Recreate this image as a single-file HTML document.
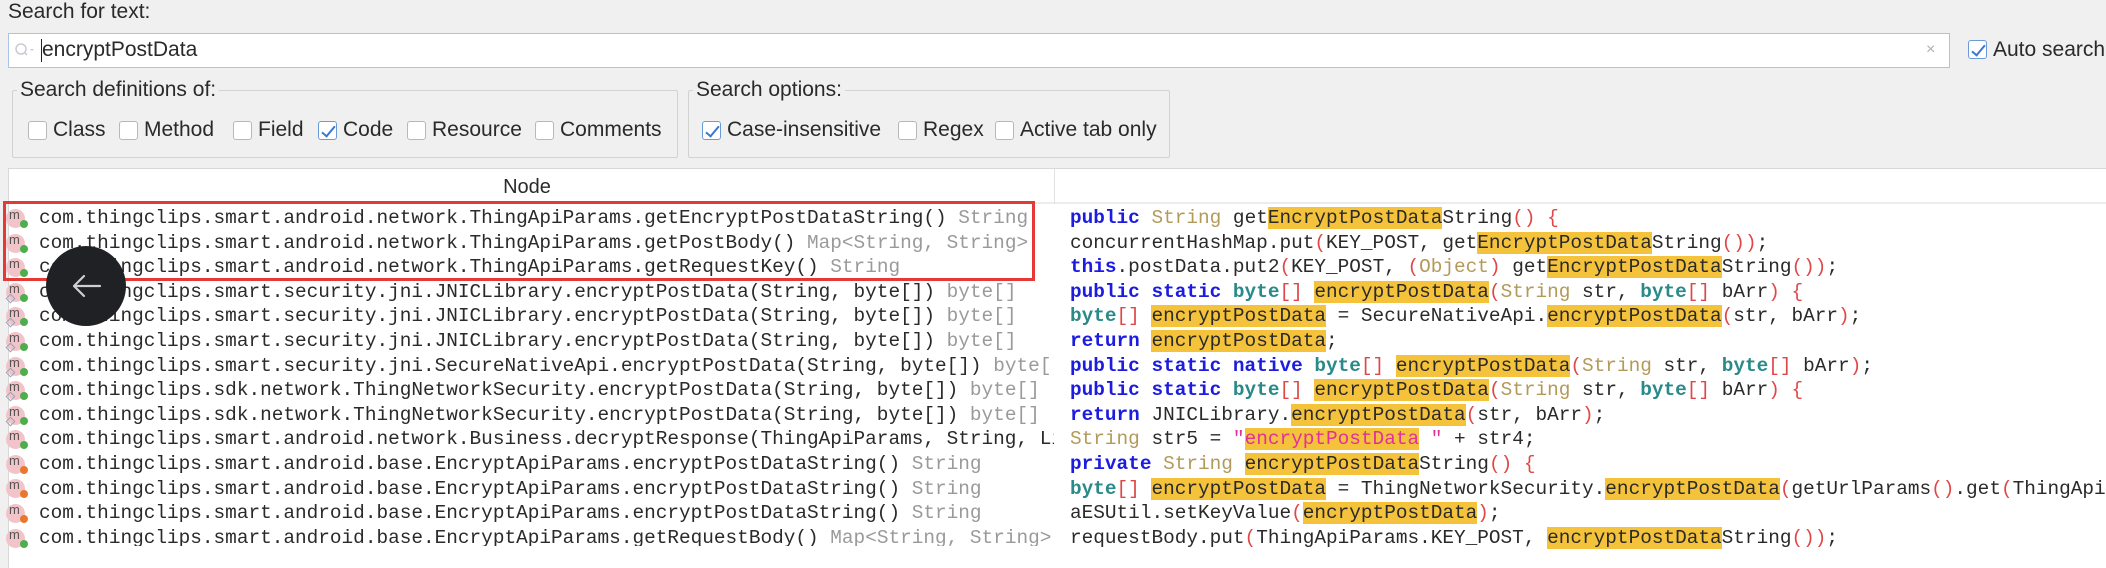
<!DOCTYPE html>
<html><head><meta charset="utf-8"><style>
*{margin:0;padding:0;box-sizing:border-box}
body{width:2106px;height:568px;background:#f0f0f0;position:relative;overflow:hidden;font-family:"Liberation Sans","DejaVu Sans",sans-serif;font-size:21px;color:#2a2a2a}
.a{position:absolute;white-space:nowrap}
.cb{position:absolute;width:19px;height:19px;border:1px solid #b8b8b8;border-radius:3px;background:#fff}
.cb.on{border-color:#6a9ad8}
.cb.on::after{content:"";position:absolute;left:6px;top:1px;width:5px;height:12px;border-right:2px solid #3a78d0;border-bottom:2px solid #3a78d0;transform:rotate(40deg)}
.lbl{position:absolute;white-space:nowrap;line-height:22px}
.grp{position:absolute;border:1px solid #d2d2d2;border-radius:2px}
.gt{position:absolute;background:#f0f0f0;padding:0 3px;line-height:22px}
.mono{font-family:"Liberation Mono","DejaVu Sans Mono",monospace;font-size:19.4px}
.row{position:absolute;height:24.6px;line-height:24.6px;white-space:pre}
.g{color:#9a9a9a}
.kw{color:#1c1ce0;font-weight:bold}
.ty{color:#b39a5a}
.bt{color:#2a8a8a;font-weight:bold}
.p{color:#e04848}
.s{color:#e0309a}
.h{background:#f5c33b}
.ic{position:absolute;width:19px;height:19px;border-radius:50%;background:#f2c4c9;left:6px}
.ic::before{content:"m";position:absolute;left:3px;top:-3px;font-family:"Liberation Sans",sans-serif;font-size:13px;color:#555;line-height:18px}
.dot{position:absolute;width:8px;height:8px;border-radius:50%;left:20px}
.dm{position:absolute;width:7px;height:7px;border:1px solid #9aa4b4;transform:rotate(45deg);left:7px}
</style></head><body>
<div class="a" style="left:8px;top:0px;line-height:24px">Search for text:</div>
<div class="a" style="left:8px;top:33px;width:1942px;height:35px;background:#fff;border:1px solid #a8c4e6"></div>
<svg class="a" style="left:14px;top:42px" width="22" height="16"><circle cx="7" cy="7" r="5" fill="none" stroke="#c8ccd2" stroke-width="1.5"/><line x1="10.5" y1="10.5" x2="13" y2="13" stroke="#c8ccd2" stroke-width="1.5"/><path d="M16 7 l2 2 l2 -2z" fill="#c8ccd2"/></svg>
<div class="a" style="left:41px;top:39px;width:1px;height:23px;background:#222"></div>
<div class="a" style="left:42px;top:38px;line-height:24px">encryptPostData</div>
<div class="a" style="left:1926px;top:38px;color:#b0b0b0;font-size:16px;line-height:24px">×</div>
<div class="cb on" style="left:1968px;top:40px"></div>
<div class="lbl" style="left:1993px;top:39px">Auto search</div>

<div class="grp" style="left:12px;top:90px;width:666px;height:68px"></div>
<div class="gt" style="left:17px;top:79px">Search definitions of:</div>
<div class="cb" style="left:28px;top:121px"></div><div class="lbl" style="left:53px;top:119px">Class</div>
<div class="cb" style="left:119px;top:121px"></div><div class="lbl" style="left:144px;top:119px">Method</div>
<div class="cb" style="left:233px;top:121px"></div><div class="lbl" style="left:258px;top:119px">Field</div>
<div class="cb on" style="left:318px;top:121px"></div><div class="lbl" style="left:343px;top:119px">Code</div>
<div class="cb" style="left:407px;top:121px"></div><div class="lbl" style="left:432px;top:119px">Resource</div>
<div class="cb" style="left:535px;top:121px"></div><div class="lbl" style="left:560px;top:119px">Comments</div>

<div class="grp" style="left:688px;top:90px;width:482px;height:68px"></div>
<div class="gt" style="left:693px;top:79px">Search options:</div>
<div class="cb on" style="left:702px;top:121px"></div><div class="lbl" style="left:727px;top:119px">Case-insensitive</div>
<div class="cb" style="left:898px;top:121px"></div><div class="lbl" style="left:923px;top:119px">Regex</div>
<div class="cb" style="left:995px;top:121px"></div><div class="lbl" style="left:1020px;top:119px">Active tab only</div>

<div class="a" style="left:8px;top:168px;width:2098px;height:400px;background:#fff;border-top:1px solid #d8d8d8;border-left:1px solid #d8d8d8"></div>
<div class="a" style="left:9px;top:169px;width:2097px;height:35px;background:#fff;border-bottom:2px solid #ececec"></div>
<div class="a" style="left:1054px;top:169px;width:1px;height:35px;background:#e2e2e2"></div>
<div class="a" style="left:0;top:175px;width:1054px;text-align:center;line-height:24px;font-size:20px">Node</div>

<div class="mono">
<div class="a" style="left:0;top:206px;width:1054px;height:340px;overflow:hidden">
<div class="row" style="left:39px;top:0px">com.thingclips.smart.android.network.ThingApiParams.getEncryptPostDataString() <span class="g">String</span></div>
<div class="row" style="left:39px;top:24.6px">com.thingclips.smart.android.network.ThingApiParams.getPostBody() <span class="g">Map&lt;String, String&gt;</span></div>
<div class="row" style="left:39px;top:49.2px">com.thingclips.smart.android.network.ThingApiParams.getRequestKey() <span class="g">String</span></div>
<div class="row" style="left:39px;top:73.8px">com.thingclips.smart.security.jni.JNICLibrary.encryptPostData(String, byte[]) <span class="g">byte[]</span></div>
<div class="row" style="left:39px;top:98.4px">com.thingclips.smart.security.jni.JNICLibrary.encryptPostData(String, byte[]) <span class="g">byte[]</span></div>
<div class="row" style="left:39px;top:123px">com.thingclips.smart.security.jni.JNICLibrary.encryptPostData(String, byte[]) <span class="g">byte[]</span></div>
<div class="row" style="left:39px;top:147.6px">com.thingclips.smart.security.jni.SecureNativeApi.encryptPostData(String, byte[]) <span class="g">byte[]</span></div>
<div class="row" style="left:39px;top:172.2px">com.thingclips.sdk.network.ThingNetworkSecurity.encryptPostData(String, byte[]) <span class="g">byte[]</span></div>
<div class="row" style="left:39px;top:196.8px">com.thingclips.sdk.network.ThingNetworkSecurity.encryptPostData(String, byte[]) <span class="g">byte[]</span></div>
<div class="row" style="left:39px;top:221.4px">com.thingclips.smart.android.network.Business.decryptResponse(ThingApiParams, String, List</div>
<div class="row" style="left:39px;top:246px">com.thingclips.smart.android.base.EncryptApiParams.encryptPostDataString() <span class="g">String</span></div>
<div class="row" style="left:39px;top:270.6px">com.thingclips.smart.android.base.EncryptApiParams.encryptPostDataString() <span class="g">String</span></div>
<div class="row" style="left:39px;top:295.2px">com.thingclips.smart.android.base.EncryptApiParams.encryptPostDataString() <span class="g">String</span></div>
<div class="row" style="left:39px;top:319.8px">com.thingclips.smart.android.base.EncryptApiParams.getRequestBody() <span class="g">Map&lt;String, String&gt;</span></div>
</div>

<div class="row" style="left:1070px;top:206px"><span class="kw">public</span> <span class="ty">String</span> get<span class="h">EncryptPostData</span>String<span class="p">()</span> <span class="p">{</span></div>
<div class="row" style="left:1070px;top:230.6px">concurrentHashMap.put<span class="p">(</span>KEY_POST, get<span class="h">EncryptPostData</span>String<span class="p">())</span>;</div>
<div class="row" style="left:1070px;top:255.2px"><span class="kw">this</span>.postData.put2<span class="p">(</span>KEY_POST, <span class="p">(</span><span class="ty">Object</span><span class="p">)</span> get<span class="h">EncryptPostData</span>String<span class="p">())</span>;</div>
<div class="row" style="left:1070px;top:279.8px"><span class="kw">public static</span> <span class="bt">byte</span><span class="p">[]</span> <span class="h">encryptPostData</span><span class="p">(</span><span class="ty">String</span> str, <span class="bt">byte</span><span class="p">[]</span> bArr<span class="p">)</span> <span class="p">{</span></div>
<div class="row" style="left:1070px;top:304.4px"><span class="bt">byte</span><span class="p">[]</span> <span class="h">encryptPostData</span> = SecureNativeApi.<span class="h">encryptPostData</span><span class="p">(</span>str, bArr<span class="p">)</span>;</div>
<div class="row" style="left:1070px;top:329px"><span class="kw">return</span> <span class="h">encryptPostData</span>;</div>
<div class="row" style="left:1070px;top:353.6px"><span class="kw">public static native</span> <span class="bt">byte</span><span class="p">[]</span> <span class="h">encryptPostData</span><span class="p">(</span><span class="ty">String</span> str, <span class="bt">byte</span><span class="p">[]</span> bArr<span class="p">)</span>;</div>
<div class="row" style="left:1070px;top:378.2px"><span class="kw">public static</span> <span class="bt">byte</span><span class="p">[]</span> <span class="h">encryptPostData</span><span class="p">(</span><span class="ty">String</span> str, <span class="bt">byte</span><span class="p">[]</span> bArr<span class="p">)</span> <span class="p">{</span></div>
<div class="row" style="left:1070px;top:402.8px"><span class="kw">return</span> JNICLibrary.<span class="h">encryptPostData</span><span class="p">(</span>str, bArr<span class="p">)</span>;</div>
<div class="row" style="left:1070px;top:427.4px"><span class="ty">String</span> str5 = <span class="s">"<span class="h">encryptPostData</span> "</span> + str4;</div>
<div class="row" style="left:1070px;top:452px"><span class="kw">private</span> <span class="ty">String</span> <span class="h">encryptPostData</span>String<span class="p">()</span> <span class="p">{</span></div>
<div class="row" style="left:1070px;top:476.6px"><span class="bt">byte</span><span class="p">[]</span> <span class="h">encryptPostData</span> = ThingNetworkSecurity.<span class="h">encryptPostData</span><span class="p">(</span>getUrlParams<span class="p">()</span>.get<span class="p">(</span>ThingApiParams</div>
<div class="row" style="left:1070px;top:501.2px">aESUtil.setKeyValue<span class="p">(</span><span class="h">encryptPostData</span><span class="p">)</span>;</div>
<div class="row" style="left:1070px;top:525.8px">requestBody.put<span class="p">(</span>ThingApiParams.KEY_POST, <span class="h">encryptPostData</span>String<span class="p">())</span>;</div>
</div>

<!-- icons -->
<div class="ic" style="top:209px"></div><div class="dot" style="top:220px;background:#4cae4c"></div>
<div class="ic" style="top:234px"></div><div class="dot" style="top:245px;background:#4cae4c"></div>
<div class="ic" style="top:258px"></div><div class="dot" style="top:269px;background:#4cae4c"></div>
<div class="ic" style="top:283px"></div><div class="dot" style="top:294px;background:#4cae4c"></div><div class="dm" style="top:295px"></div>
<div class="ic" style="top:307px"></div><div class="dot" style="top:318px;background:#4cae4c"></div><div class="dm" style="top:319px"></div>
<div class="ic" style="top:332px"></div><div class="dot" style="top:343px;background:#4cae4c"></div><div class="dm" style="top:344px"></div>
<div class="ic" style="top:357px"></div><div class="dot" style="top:368px;background:#4cae4c"></div><div class="dm" style="top:369px"></div>
<div class="ic" style="top:381px"></div><div class="dot" style="top:392px;background:#4cae4c"></div><div class="dm" style="top:393px"></div>
<div class="ic" style="top:406px"></div><div class="dot" style="top:417px;background:#4cae4c"></div><div class="dm" style="top:418px"></div>
<div class="ic" style="top:430px"></div><div class="dot" style="top:441px;background:#4cae4c"></div>
<div class="ic" style="top:455px"></div><div class="dot" style="top:466px;background:#e8792c"></div>
<div class="ic" style="top:479px"></div><div class="dot" style="top:490px;background:#e8792c"></div>
<div class="ic" style="top:504px"></div><div class="dot" style="top:515px;background:#e8792c"></div>
<div class="ic" style="top:529px"></div><div class="dot" style="top:540px;background:#4cae4c"></div>

<div class="a" style="left:3px;top:201px;width:1032px;height:80px;border:3px solid #e53935"></div>
<div class="a" style="left:46px;top:246px;width:80px;height:80px;border-radius:50%;background:#202124"></div>
<svg class="a" style="left:66px;top:266px" width="40" height="40"><path d="M34 20 H8 M18 10 L8 20 L18 30" fill="none" stroke="#cfcfcf" stroke-width="2.2" stroke-linecap="round" stroke-linejoin="round"/></svg>
</body></html>
